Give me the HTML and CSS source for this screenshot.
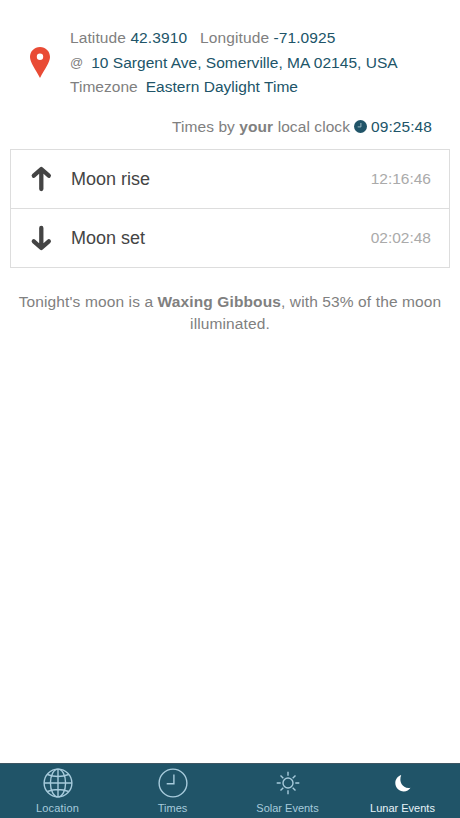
FILE: index.html
```html
<!DOCTYPE html>
<html lang="en">
<head>
<meta charset="utf-8">
<title>Lunar Events</title>
<link rel="stylesheet" href="styles.css">
</head>
<body>
<main class="content">
  <section class="place">
    <svg class="pin" viewBox="0 0 20 31"><path fill-rule="evenodd" d="M10 0C4.300 0 0 4.400 0 10c0 5.400 5.500 12.200 10 21 4.500-8.800 10-15.600 10-21C20 4.400 15.700 0 10 0Zm0 6.600a3.200 3.200 0 1 1 0 6.400 3.200 3.200 0 0 1 0-6.400Z"/></svg>
    <div class="details">
      <div class="line coords"><span>Latitude <b class="value">42.3910</b></span><span class="longitude">Longitude <b class="value">-71.0925</b></span></div>
      <div class="line address"><span class="at">@</span><b class="value">10 Sargent Ave, Somerville, MA 02145, USA</b></div>
      <div class="line zone"><span>Timezone</span><b class="value">Eastern Daylight Time</b></div>
    </div>
  </section>
  <div class="clock-line">
    <span>Times by <strong>your</strong> local clock</span>
    <svg class="mini-clock" viewBox="0 0 13 13"><circle cx="6.500" cy="6.500" r="6.500"/><path d="M6.900 3v3.900H3.700"/></svg>
    <b class="value">09:25:48</b>
  </div>
  <ul class="events">
    <li class="event"><svg class="arrow" viewBox="0 0 20 26"><path d="M10.300 23V3.300M2.800 9.700l7.500-6.700 7.500 6.700"/></svg><span class="name">Moon rise</span><time>12:16:46</time></li>
    <li class="event"><svg class="arrow" viewBox="0 0 20 26"><path d="M10.300 3v19.700M2.800 16.300l7.500 6.700 7.500-6.700"/></svg><span class="name">Moon set</span><time>02:02:48</time></li>
  </ul>
  <p class="phase">Tonight's moon is a <strong>Waxing Gibbous</strong>, with 53% of the moon illuminated.</p>
</main>
<nav class="tabs">
  <a class="tab"><svg class="icon" viewBox="0 0 30 30"><circle cx="15" cy="15" r="13.900"/><ellipse cx="15" cy="15" rx="7.600" ry="13.900"/><path d="M15 1v28M1 15h28M4.300 6.500q10.700 4 21.400 0M4.300 23.500q10.700-4 21.400 0"/></svg><span class="spaced">Location</span></a>
  <a class="tab"><svg class="icon" viewBox="0 0 30 30"><circle cx="15" cy="15" r="13.900"/><path d="M15.900 6.500v9.200H8.700"/></svg><span>Times</span></a>
  <a class="tab"><svg class="icon" viewBox="0 0 30 30"><circle cx="15" cy="15" r="5"/><path d="M15 3.700v4M15 22.300v4M3.700 15h4M22.300 15h4M7.500 7.500l2.800 2.800M19.700 19.700l2.800 2.800M22.500 7.500l-2.800 2.800M10.300 19.700l-2.800 2.800"/></svg><span>Solar Events</span></a>
  <a class="tab active"><svg class="icon" viewBox="0 0 30 30"><path class="moon" d="M13.200 7C9.800 8.100 7.300 11.300 7.300 15c0 4.700 3.800 8.400 8.500 8.400 2.800 0 5.300-1.400 6.700-3.700-7.200 1.500-12.200-5.200-9.300-12.700Z"/></svg><span>Lunar Events</span></a>
</nav>
</body>
</html>
```

FILE: styles.css
```css
* { box-sizing: border-box; }
body {
  margin: 0;
  height: 818px;
  display: flex;
  flex-direction: column;
  background: #fff;
  color: #808080;
  font: 15.5px/22px "Liberation Sans", Arial, sans-serif;
}
.content { flex: 1; padding: 26px 10px 0; }
.place { display: flex; padding-left: 20px; }
.pin { width: 20px; height: 31px; margin: 21px 20px 0 0; fill: #e94b35; }
.line { display: flex; height: 24.500px; line-height: 24.500px; white-space: nowrap; }
.value { font-weight: 400; color: #205468; }
.coords { letter-spacing: 0.1px; }
.longitude { margin-left: 13px; }
.address { gap: 8px; letter-spacing: 0.020px; }
.at { font-size: 13px; }
.zone { gap: 8px; letter-spacing: 0.030px; }
.clock-line {
  display: flex;
  justify-content: flex-end;
  align-items: center;
  height: 22px;
  margin: 16px 18px 0 0;
  letter-spacing: 0.080px;
}
.mini-clock { width: 13px; height: 13px; margin: 0 4px; fill: #205468; }
.mini-clock path { fill: none; stroke: #9db8c2; stroke-width: 1; }
.events {
  list-style: none;
  margin: 11px 0 0;
  padding: 0;
  border: 1px solid #ddd;
}
.event { display: flex; align-items: center; height: 58px; padding: 0 18px 0 20px; }
.event + .event { height: 59px; border-top: 1px solid #ddd; }
.arrow { width: 20px; height: 26px; margin-right: 20px; fill: none; stroke: #444; stroke-width: 4.300; stroke-linecap: round; stroke-linejoin: round; overflow: visible; }
.name { flex: 1; font-size: 18px; color: #444; }
time { color: #aaa; }
.phase { margin: 23px 0 0; text-align: center; letter-spacing: 0.120px; }
.tabs { display: flex; height: 55px; background: #205468; border-top: 1px solid #3d5663; }
.tab {
  flex: 1;
  display: flex;
  flex-direction: column;
  align-items: center;
  padding-top: 4px;
  color: #a7cbdc;
  font-size: 11px;
  line-height: 13px;
}
.icon { width: 30px; height: 30px; margin-bottom: 4px; fill: none; stroke: #a7cbdc; stroke-width: 1.400; }
.icon .moon { fill: #fff; stroke: none; }
.spaced { letter-spacing: 0.200px; }
.active { color: #e8f3f8; }
```
